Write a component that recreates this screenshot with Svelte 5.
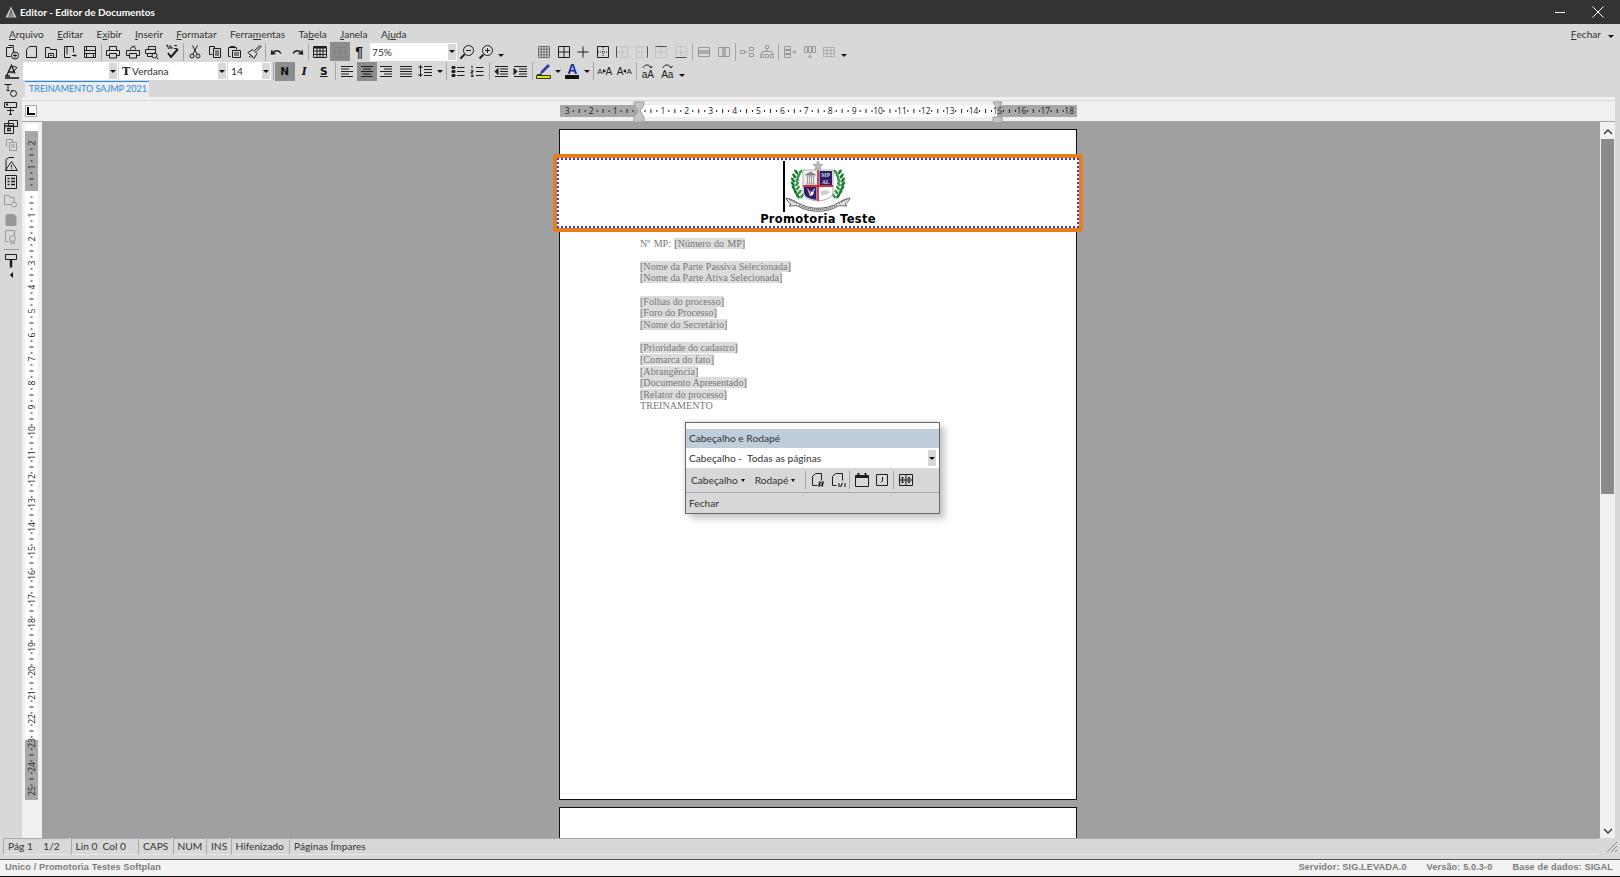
<script>
	const paths = {
		docplus: '<path d="M4.5 1.5h5v2M2.5 3.5h6l1 1v4M2.5 3.5v9h4"/><circle cx="11" cy="11.5" r="3.5"/><path d="M9 11.5h4M11 9.5v4"/>',
		page: '<path d="M6.5 2.5h7v11h-10v-8z"/>',
		open: '<path d="M2.5 13.5v-10h4l1 2h6v8z"/><path d="M5.5 13.5v-4h5v4M7 11.5h2"/>',
		pagego: '<path d="M2.5 2.5h9v6M2.5 2.5v11h6"/><path d="M10 11.5h4M12.5 10l1.5 1.5-1.5 1.5"/><path d="M5 2.5v8"/>',
		save: '<path d="M2.5 2.5h11v11h-11z"/><path d="M2.5 6.5h11M2.5 9.5h11M4.5 2.5v4M11.5 9.5v4M4.5 9.5v4"/>',
		print: '<path d="M4.5 6V2.5h7V6M4.5 11.5h-3v-5h13v5h-3"/><path d="M4.5 9.5h7v4.5h-7z"/>',
		preview: '<path d="M5.5 5.5c0-4 5-4 5 0M1.5 6.5h13v5h-3M4.5 11.5h-3v-5"/><path d="M4.5 9.5h7v4.5h-7z"/><path d="M8 3.5l2-2" />',
		printz: '<path d="M4.5 5V2.5h7V5M1.5 5.5h10v4h-10z"/><circle cx="10.5" cy="11.5" r="2.5"/><path d="M3.5 9.5v3h4.5M12.5 13.5l2 1.5"/>',
		spell: '<path d="M2 2l1.5-1 1 4M6 1v4M6 3h2v2M10 1.5h3M10 4.5h3"/><path d="M4 9l3 4 7-8" stroke-width="2"/>',
		cut: '<circle cx="5" cy="12" r="2"/><circle cx="11" cy="12" r="2"/><path d="M6 10L10.5 1.5M10 10L5.5 1.5"/>',
		copy: '<path d="M5.5 10.5h-3v-8h5v2"/><path d="M6.5 4.5h7v9h-7z"/><path d="M8 7h4M8 9h4M8 11h4"/>',
		paste: '<path d="M4.5 12.5h-2v-9h8v2"/><path d="M4.5 3.5v-1h4v1"/><path d="M6.5 6.5h8v7h-8z"/><path d="M8 9h5M8 11h5"/>',
		brush: '<path d="M2 8.5l5-3 4 4-3 5z"/><path d="M9 6l5-4.5 1 1-4.5 5"/><path d="M4 10l3 3M3 12l1.5 1.5"/>',
		undo: '<path d="M3 6l-.5 4 4-.5M3 9.5c3-4 7-3.5 9 0" stroke-width="1.4"/>',
		redo: '<path d="M13 6l.5 4-4-.5M13 9.5c-3-4-7-3.5-9 0" stroke-width="1.4"/>',
		table: '<path d="M1.5 2.5h13v11h-13z" /><path d="M1.5 3.5h13" stroke-width="2"/><path d="M1.5 7h13M1.5 10.5h13M5 2.5v11M8 2.5v11M11 2.5v11"/>',
		faint: '<path d="M2.5 3.5h11v10h-11zM8 3.5v10M2.5 8.5h11" opacity=".1"/>',
		zoomout: '<circle cx="9.5" cy="6.5" r="5"/><path d="M7 6.5h5M5.5 10.5l-4 4" /><path d="M5.5 10.5l-4 4" stroke-width="2"/>',
		zoomin: '<circle cx="9.5" cy="6.5" r="5"/><path d="M7 6.5h5M9.5 4v5"/><path d="M5.5 10.5l-4 4" stroke-width="2"/>',
		gridall: '<path d="M2.5 2.5h11v11h-11zM8 2.5v11M2.5 8h11M5.2 2.5v11M10.8 2.5v11M2.5 5.2h11M2.5 10.8h11" stroke-dasharray="1 1"/>',
		gridfull: '<path d="M2.5 2.5h11v11h-11zM8 2.5v11M2.5 8h11"/>',
		gridin: '<path d="M8 2.5v11M2.5 8h11"/>',
		gridout: '<path d="M2.5 2.5h11v11h-11z"/><path d="M8 3v10M3 8h10" stroke-dasharray="1 1"/>',
		gridl: '<path d="M2.5 2.5v11" stroke="#333"/><path d="M2.5 2.5h11v11h-11zM8 3v10M3 8h10" stroke-dasharray="1 1" opacity=".6"/>',
		gridr: '<path d="M13.5 2.5v11" stroke="#333"/><path d="M2.5 2.5h11v11h-11zM8 3v10M3 8h10" stroke-dasharray="1 1" opacity=".6"/>',
		gridt: '<path d="M2.5 2.5h11" stroke="#333"/><path d="M2.5 2.5h11v11h-11zM8 3v10M3 8h10" stroke-dasharray="1 1" opacity=".6"/>',
		gridb: '<path d="M2.5 13.5h11" stroke="#333"/><path d="M2.5 2.5h11v11h-11zM8 3v10M3 8h10" stroke-dasharray="1 1" opacity=".6"/>',
		merge: '<path d="M2.5 3.5h11v9h-11z"/><path d="M2.5 7h11M2.5 9h11" stroke-width="2" opacity=".7"/>',
		split: '<path d="M2.5 3.5h11v9h-11z"/><path d="M7 3.5v9M9 3.5v9" stroke-width="2" opacity=".7"/>',
		mvcol: '<path d="M1.5 6.5h4v3h-4zM6 8h3M10.5 3.5h4v3h-4zM10.5 9.5h4v3h-4z"/>',
		tree: '<path d="M6.5 1.5h3v3h-3zM1.5 10.5h3v3h-3zM11.5 10.5h3v3h-3zM8 4.5v3M3 10V7.5h10V10M6.5 10.5h3v3h-3z"/>',
		rowsarrow: '<path d="M2.5 2.5h6v3h-6zM2.5 6.5h6v3h-6zM2.5 10.5h6v3h-6zM10 8h3M12 6.5l2 1.5-2 1.5"/>',
		colsarrow: '<path d="M2.5 2.5h3v6h-3zM6.5 2.5h3v6h-3zM10.5 2.5h3v6h-3zM8 10v3M6.5 12l1.5 2 1.5-2"/>',
		gridsh: '<path d="M2.5 3.5h11v9h-11zM2.5 6.5h11M2.5 9.5h11M6 3.5v9M10 3.5v9" stroke-dasharray="1 .6"/>',
		style: '<path d="M2.5 13L7.5 2.500 11 10.500M1 13h5M5 9h5" stroke-width="1.400"/><path d="M9 3l4 1.500-5 6" /><path d="M1 15h14" stroke-width="1.600"/>',
		left: '<path d="M2 3.5h12M2 6h8M2 8.5h12M2 11h8M2 13.5h12"/>',
		center: '<path d="M2 3.5h12M4 6h8M2 8.5h12M4 11h8M2 13.5h12"/>',
		right: '<path d="M2 3.5h12M6 6h8M2 8.5h12M6 11h8M2 13.5h12"/>',
		justify: '<path d="M2 3.5h12M2 6h12M2 8.5h12M2 11h12M2 13.5h12"/>',
		spacing: '<path d="M7 3.5h8M7 6.5h8M7 9.5h8M7 12.5h8"/><path d="M3.5 3v10M1.5 5l2-2.500 2 2.500M1.500 11l2 2.500 2-2.500"/>',
		bullets: '<path d="M7 4.500h7.500M7 8.500h7.500M7 12.500h7.500"/><path d="M2 3.500h3v2h-3zM2 7.500h3v2h-3zM2 11.500h3v2h-3z" fill="currentColor"/>',
		numbers: '<path d="M7 4.500h7.500M7 8.500h7.500M7 12.500h7.500M3 2.500v3M2 7.500h2v1.500h-2v1h2M2 12h2M2 13.500h2M4 12v2"/>',
		outdent: '<path d="M2 3.500h13M7 6h8M7 8.500h8M7 11h8M2 13.500h13"/><path d="M5 5.500l-3 3 3 3z" fill="currentColor"/>',
		indent: '<path d="M2 3.500h13M7 6h8M7 8.500h8M7 11h8M2 13.500h13"/><path d="M2 5.500l3 3-3 3z" fill="currentColor"/>',
		thand: '<path d="M1.500 2.500h7M5 2.500v6M3.500 8.500h3"/><circle cx="10.500" cy="11.500" r="3"/><path d="M9 8v2"/>',
		screent: '<path d="M1.500 1.500h12v5h-12z"/><path d="M3 3.500h2" stroke-width="2"/><path d="M4 9.500h7M7.500 6.500v7M6 13.500h3"/>',
		cards: '<path d="M5.500 1.500h9v6h-9zM1.500 4.500h9v10h-9z"/><path d="M1.500 7h9M4 9.500h4M4 11.500h4" stroke-width="1.400"/>',
		pages: '<path d="M3.500 9.500v-7h6v3"/><path d="M6.500 5.500h7v8h-7z"/><path d="M8 8h4M8 10h4"/>',
		warn: '<path d="M3 14.500V3.500l3-2h5"/><path d="M8.500 5.500l6 9h-12z"/><path d="M8.500 9v2.500M8.500 12.500v1"/>',
		list: '<path d="M2.500 1.500h11v13h-11z"/><path d="M4.500 4.500h2M8 4.500h4M4.500 7.500h2M8 7.500h4M4.500 10.500h2M8 10.500h4" stroke-width="1.400"/>',
		foldermag: '<path d="M11 9V4.500H7l-1-2H1.500v9H8"/><circle cx="11" cy="11.500" r="2.500"/>',
		solid: '<path d="M4 3.500h7l2 2v9H3v-10z" fill="currentColor"/>',
		cert: '<path d="M2.500 1.500h9v6M2.500 1.500v11h3"/><circle cx="9.500" cy="9.500" r="3"/><path d="M8 12v3l1.500-1 1.500 1v-3"/>',
		paint: '<path d="M2.500 1.500h11v5h-11z"/><path d="M8 6.500v8" stroke-width="2.500"/>',
		hash: '<path d="M5.500 1.500h6v7M5.500 1.500l-3 3v9h5"/><path d="M10 9l-1 6M13 9l-1 6M8.500 11h5.500M8 13h5.500" stroke-width="1.100"/>',
		pnum: '<path d="M5.500 1.500h7v7M5.500 1.500l-3 3v9h4"/><path d="M9 11v4M15 11v4M10.500 15l2-4" stroke-width="1.100"/>',
		cal: '<path d="M1.500 3.500h13v11h-13z"/><path d="M1.500 5h13" stroke-width="2"/><path d="M4.500 1v3M11.500 1v3" stroke-width="2"/>',
		clock: '<path d="M2.500 2.500h11v11h-11z"/><path d="M8.500 5v4l-1.500 1.500"/>',
		fields: '<path d="M1.500 2.500h13v11h-13zM1.500 8h13M8 2.500v11"/><path d="M4.500 5v6M3 6.500l1.500-1.500 1.500 1.500M3 9.500l1.500 1.500 1.500-1.500M11 5v6M9.500 6.500l1.500-1.500 1.500 1.500M9.500 9.500l1.500 1.500 1.500-1.500"/>'
	};

	const menu = [
		['', 'A', 'rquivo'],
		['', 'E', 'ditar'],
		['E', 'x', 'ibir'],
		['', 'I', 'nserir'],
		['', 'F', 'ormatar'],
		['Ferra', 'm', 'entas'],
		['Ta', 'b', 'ela'],
		['', 'J', 'anela'],
		['Aj', 'u', 'da']
	];

	const row1a = ['docplus', 'page', 'open', 'pagego', 'save', '|', 'print', 'preview', 'printz', 'spell', '|', 'cut', 'copy', 'paste', 'brush', '|', 'undo', 'redo', '|', 'table'];
	const row1b = ['gridall', 'gridfull', 'gridin', 'gridout', '~gridl', '~gridr', '~gridt', '~gridb', '|', '~merge', '~split', '|', '~mvcol', '~tree', '|', '~rowsarrow', '~colsarrow', '~gridsh'];
	const leftbar = ['thand', 'screent', 'cards', '~pages', 'warn', 'list', '~foldermag', '~solid', '~cert'];

	const fieldLines = [
		[],
		['[Nome da Parte Passiva Selecionada]'],
		['[Nome da Parte Ativa Selecionada]'],
		[],
		['[Folhas do processo]'],
		['[Foro do Processo]'],
		['[Nome do Secretário]'],
		[],
		['[Prioridade do cadastro]'],
		['[Comarca do fato]'],
		['[Abrangência]'],
		['[Documento Apresentado]'],
		['[Relator do processo]']
	];

	const cm = 23.9;
	const hTicks = [];
	for (let n = -3; n <= 18; n++) hTicks.push(n);
	const vTicks = [];
	for (let n = -2; n <= 25; n++) vTicks.push(n);
	const vSpan = 24;

	// folhas do louro: cada ramo sobe curvando para fora
	const leaves = [];
	for (let k = 0; k < 7; k++) {
		const t = k / 6;
		const bow = 5 * Math.sin(t * Math.PI * 0.9);
		leaves.push({ x: 15 - bow, y: 35 - t * 24 });
	}
</script>

{#snippet icon(name)}
	<svg class="ico" class:off={name.startsWith('~')} viewBox="0 0 16 16" width="16" height="16" fill="none" stroke="currentColor">
		{@html paths[name.replace('~', '')]}
	</svg>
{/snippet}

{#snippet tools(list)}
	{#each list as name}
		{#if name === '|'}
			<span class="sep"></span>
		{:else}
			<span class="btn">{@render icon(name)}</span>
		{/if}
	{/each}
{/snippet}

{#snippet branch()}
	{#each leaves as leaf}
		<ellipse cx={leaf.x - 2.200} cy={leaf.y} rx="1.500" ry="2.900" transform="rotate(-35 {leaf.x - 2.200} {leaf.y})" fill="#1d7a35" />
		<ellipse cx={leaf.x + 2} cy={leaf.y} rx="1.400" ry="2.700" transform="rotate(35 {leaf.x + 2} {leaf.y})" fill="#36964c" />
	{/each}
{/snippet}

<div class="app">
	<header class="titlebar">
		<svg class="appicon" viewBox="0 0 12 12" width="12" height="12">
			<path d="M6 0.500L11.500 11.500H0.500z" fill="#c9c9c9" />
			<path d="M6 3v8.500M3.500 11.500L6 5l2.500 6.500" stroke="#5a5a5a" fill="none" />
		</svg>
		<span class="apptitle">Editor - Editor de Documentos</span>
		<span class="winbtns">
			<svg viewBox="0 0 10 10" width="10" height="10"><path d="M0 5.500h10" stroke="#fff" /></svg>
			<svg viewBox="0 0 12 12" width="12" height="12"><path d="M.5.500l11 11M11.500.500l-11 11" stroke="#fff" /></svg>
		</span>
	</header>

	<nav class="menu">
		{#each menu as [a, u, b]}
			<span>{a}<u>{u}</u>{b}</span>
		{/each}
		<span class="close"><u>F</u>echar<i class="tri"></i></span>
	</nav>

	<div class="bar bar1">
		{@render tools(row1a)}
		<span class="btn pressed">{@render icon('faint')}</span>
		<span class="btn pilcrow">¶</span>
		<span class="combo zoombox">75%<i class="drop"><b class="tri"></b></i></span>
		<span class="btn">{@render icon('zoomout')}</span>
		<span class="btn">{@render icon('zoomin')}</span>
		<span class="more"><i class="tri"></i></span>
		<span class="gap"></span>
		{@render tools(row1b)}
		<span class="more"><i class="tri"></i></span>
	</div>

	<div class="bar bar2">
		<span class="btn">{@render icon('style')}</span>
		<span class="combo stylebox"><i class="drop"><b class="tri"></b></i></span>
		<span class="combo fontbox"><span class="tt">T</span>Verdana<i class="drop"><b class="tri"></b></i></span>
		<span class="combo sizebox">14<i class="drop"><b class="tri"></b></i></span>
		<span class="sep"></span>
		<span class="btn pressed fmt bold">N</span>
		<span class="btn fmt ital">I</span>
		<span class="btn fmt under">S</span>
		<span class="sep"></span>
		<span class="btn">{@render icon('left')}</span>
		<span class="btn pressed">{@render icon('center')}</span>
		<span class="btn">{@render icon('right')}</span>
		<span class="btn">{@render icon('justify')}</span>
		<span class="btn">{@render icon('spacing')}</span>
		<span class="more small"><i class="tri"></i></span>
		<span class="sep"></span>
		<span class="btn">{@render icon('bullets')}</span>
		<span class="btn">{@render icon('numbers')}</span>
		<span class="sep"></span>
		<span class="btn">{@render icon('outdent')}</span>
		<span class="btn">{@render icon('indent')}</span>
		<span class="sep"></span>
		<span class="btn">
			<svg viewBox="0 0 16 16" width="16" height="16">
				<path d="M.5 12.500h14v3H.500z" fill="#e8e000" stroke="#333" />
				<path d="M4 11l1-3 7-7 2 2-7 7z" fill="#2f3f9f" />
				<path d="M1 11.500h5" stroke="#333" />
			</svg>
		</span>
		<span class="more small"><i class="tri"></i></span>
		<span class="btn colora"><span>A</span><i></i></span>
		<span class="more small"><i class="tri"></i></span>
		<span class="sep"></span>
		<span class="btn tiny"><span class="sa">A</span><i class="rt"></i><span>A</span></span>
		<span class="btn tiny"><span>A</span><i class="lt"></i><span class="sa">A</span></span>
		<span class="sep"></span>
		<span class="btn case">
			<svg viewBox="0 0 16 16" width="16" height="16" fill="none" stroke="#222"><path d="M3 5c1-4 7-4 8 0M9.500 3.500L11 5l1.500-2" /></svg>
			<span>aA</span>
		</span>
		<span class="btn case">
			<svg viewBox="0 0 16 16" width="16" height="16" fill="none" stroke="#222"><path d="M3 5c1-4 7-4 8 0M9.500 3.500L11 5l1.500-2" /></svg>
			<span>Aa</span>
		</span>
		<span class="more"><i class="tri"></i></span>
	</div>

	<div class="body">
		<aside class="leftbar">
			{#each leftbar as name}
				<span class="lbtn">{@render icon(name)}</span>
			{/each}
			<span class="hsep"></span>
			<span class="lbtn">{@render icon('paint')}</span>
			<i class="lefttri"></i>
		</aside>

		<div class="content">
			<div class="tabs"><span class="tab">TREINAMENTO SAJMP 2021</span></div>
			<div class="strip"></div>
			<div class="rulerrow">
				<span class="lbox"><svg viewBox="0 0 8 8" width="8" height="8"><path d="M1 0v7h7" fill="none" stroke="#000" stroke-width="2" /></svg></span>
				<svg class="hruler" viewBox="0 0 520 21" width="520" height="21">
					<rect x="1" y="4" width="517" height="12" fill="#fff" />
					<rect x="1" y="4" width="79" height="12" fill="#a8a8a8" />
					<rect x="438" y="4" width="80" height="12" fill="#a8a8a8" />
					{#each hTicks as n}
						{@const x = 80 + n * cm}
						{#if n !== 0}
							<text x={x} y="12.800" text-anchor="middle">{Math.abs(n)}</text>
						{/if}
						{#if n < 18}
							<path d="M{x + cm * 0.25} 9v2M{x + cm * 0.5} 8v4M{x + cm * 0.75} 9v2" stroke="#222" />
						{/if}
					{/each}
					<path d="M75 1h10v3l-4 6 4 6v5H75v-5l4-6-4-6z" fill="#c4c4c4" stroke="#999" />
					<path d="M434 1h9l-4 7-1 0z" fill="#c4c4c4" stroke="#999" />
					<path d="M434 21v-5h9v5" fill="#c4c4c4" stroke="#999" />
				</svg>
			</div>

			<div class="editor">
				<div class="vcol">
					<svg class="vruler" viewBox="0 0 13 676" width="13" height="676">
						<rect width="13" height="676" fill="#fff" />
						<rect y="7" width="13" height="60" fill="#a8a8a8" />
						<rect y="616" width="13" height="60" fill="#a8a8a8" />
						{#each vTicks as n}
							{@const y = 67 + n * vSpan}
							{#if n !== 0}
								<text transform="translate(9.500 {y}) rotate(-90)" text-anchor="middle">{Math.abs(n)}</text>
							{/if}
							{#if n < 25}
								<path d="M5.500 {y + 6}h2M4.500 {y + 12}h4M5.500 {y + 18}h2" stroke="#222" />
							{/if}
						{/each}
					</svg>
				</div>

				<main class="workspace">
					<section class="page">
						<div class="frame">
							<div class="hdr">
								<div class="logorow">
									<span class="caret"></span>
									<svg class="logo" viewBox="0 0 66 51" width="66" height="51">
										<path d="M33 0l1.500 3.500h3.500l-3 2.200 1 3.500-3-2-3 2 1-3.500-3-2.200h3.500z" fill="#bbb" stroke="#777" stroke-width=".5" />
										{@render branch()}
										<g transform="matrix(-1 0 0 1 66 0)">{@render branch()}</g>
										<path d="M18 9h30v22c0 6-7 8-15 9-8-1-15-3-15-9z" fill="#fff" stroke="#aaa" />
										<rect x="19" y="10" width="12.500" height="14" fill="#eee" />
										<path d="M20.500 14l10-.1-5-3zM21.500 15h8M22.500 15.500v7M24.500 15.500v7M26.500 15.500v7M28.500 15.500v7M21 23h9" fill="#888" stroke="#777" stroke-width=".7" />
										<rect x="34.500" y="10" width="12.500" height="14" fill="#2b1f6d" />
										<text class="mp" x="40.700" y="16">MP</text>
										<text class="mp" x="40.700" y="22.500">AL</text>
										<path d="M19 26h12.500v13c-7-1-12.500-3-12.500-8z" fill="#2b1f6d" />
										<path d="M22 27l4 4 4-4-2 7-3 1z" fill="#fff" />
										<path d="M22 27l4 4v3z" fill="#d73b3b" />
										<path d="M26 31l4-4-2 4z" fill="#3b6fd7" />
										<path d="M36 30c3-1 7-1 9 1-2 2-6 4-9 3z" fill="#ccc" />
										<path d="M33 9v31M18 25h30" stroke="#d92f2f" stroke-width="1.800" />
										<path d="M1 37c5 1 9 3 12 5 12 7 28 7 40 0 3-2 7-4 12-5-1 3-3 5-5 6l2 2c-4 0-7-1-9 0-10 7-30 7-40 0-2-1-5 0-9 0l2-2c-2-1-4-3-5-6z" fill="#e4e4e4" stroke="#555" stroke-width=".9" />
										<path d="M14 44c10 6 28 6 38 0" fill="none" stroke="#333" stroke-dasharray="1 1" />
										<path d="M4 38.500l8 4M62 38.500l-8 4" stroke="#333" stroke-dasharray="1 1" />
									</svg>
								</div>
								<div class="orgname">Promotoria Teste</div>
							</div>
						</div>

						<div class="doc">
							<div class="line first">Nº MP: <mark>[Número do MP]</mark></div>
							{#each fieldLines as [text]}
								<div class="line">
									{#if text}<mark>{text}</mark>{:else}&nbsp;{/if}
								</div>
							{/each}
							<div class="line">TREINAMENTO</div>
						</div>
					</section>
					<section class="page next"></section>

					<div class="popup">
						<div class="poptop"></div>
						<div class="poptitle">Cabeçalho e Rodapé</div>
						<div class="popsel">Cabeçalho -&nbsp; Todas as páginas<i class="drop"><b class="tri"></b></i></div>
						<div class="poptools">
							<span class="popmenu">Cabeçalho <i class="tri"></i></span>
							<span class="popmenu">Rodapé <i class="tri"></i></span>
							<span class="sep"></span>
							<span class="btn">{@render icon('hash')}</span>
							<span class="btn">{@render icon('pnum')}</span>
							<span class="sep"></span>
							<span class="btn">{@render icon('cal')}</span>
							<span class="btn">{@render icon('clock')}</span>
							<span class="sep"></span>
							<span class="btn">{@render icon('fields')}</span>
						</div>
						<div class="popclose">Fechar</div>
					</div>
				</main>

				<div class="scrollbar">
					<span class="sbtn"><svg viewBox="0 0 10 6" width="10" height="6"><path d="M1 5l4-4 4 4" fill="none" stroke="#333" stroke-width="1.300" /></svg></span>
					<span class="thumb"></span>
					<span class="track"></span>
					<span class="sbtn"><svg viewBox="0 0 10 6" width="10" height="6"><path d="M1 1l4 4 4-4" fill="none" stroke="#333" stroke-width="1.300" /></svg></span>
				</div>
			</div>
		</div>
	</div>

	<div class="status">
		<span class="cell c1">Pág 1 &nbsp;&nbsp; 1/2</span>
		<span class="cell c2">Lin 0 &nbsp;Col 0</span>
		<span class="cell c3">CAPS</span>
		<span class="cell c4">NUM</span>
		<span class="cell c5">INS</span>
		<span class="cell c6">Hifenizado</span>
		<span class="cell c7">Páginas Ímpares</span>
		<svg class="grip" viewBox="0 0 14 14" width="14" height="14"><path d="M13 3L3 13M13 7l-6 6M13 11l-2 2" stroke="#8a8a8a" fill="none" /></svg>
	</div>

	<footer class="footer">
		<span>Unico / Promotoria Testes Softplan</span>
		<span class="info">
			<span>Servidor: SIG.LEVADA.0</span>
			<span>Versão: 5.0.3-0</span>
			<span>Base de dados: SIGAL</span>
		</span>
	</footer>
</div>

<style>
	:global(body) {
		margin: 0;
		overflow: hidden;
	}

	.app {
		width: 1620px;
		height: 877px;
		display: flex;
		flex-direction: column;
		background: #d8d8d8;
		font-family: 'Lato', sans-serif;
		font-size: 10.200px;
		color: #333;
		overflow: hidden;
	}

	.titlebar {
		height: 24px;
		flex: none;
		display: flex;
		align-items: center;
		background: #333;
		color: #fff;
		padding-left: 5px;
		box-sizing: border-box;
	}

	.apptitle {
		margin-left: 3px;
		font-size: 10px;
		font-weight: 700;
	}

	.winbtns {
		margin-left: auto;
		display: flex;
		align-items: center;
		gap: 27px;
		padding-right: 16px;
	}

	.menu {
		height: 18px;
		flex: none;
		display: flex;
		align-items: center;
		gap: 13.400px;
		padding: 1px 0 0 9px;
		box-sizing: border-box;
		font-size: 10.100px;
	}

	.close {
		margin-left: auto;
		padding-right: 6px;
		display: flex;
		align-items: center;
	}

	.close .tri {
		margin: 6px 0 0 7px;
	}

	.tri {
		display: inline-block;
		width: 0;
		height: 0;
		border-left: 3px solid transparent;
		border-right: 3px solid transparent;
		border-top: 3px solid #111;
	}

	.bar {
		display: flex;
		align-items: center;
		flex: none;
		padding-left: 2px;
	}

	.bar1 {
		height: 19px;
	}

	.bar2 {
		height: 20px;
	}

	.btn {
		width: 19.500px;
		height: 19px;
		flex: none;
		display: flex;
		align-items: center;
		justify-content: center;
		color: #1c1c1c;
	}

	.ico {
		color: #1e1e1e;
		display: block;
	}

	.ico.off {
		color: #989898;
	}

	.pressed {
		background: #8d8d8d;
	}

	.sep {
		width: 1px;
		height: 18px;
		flex: none;
		margin: 0 1.500px;
		background: #a6a6a6;
	}

	.pilcrow {
		font-family: 'Liberation Sans', sans-serif;
		font-size: 14px;
		font-weight: bold;
		color: #111;
	}

	.combo {
		position: relative;
		height: 18px;
		flex: none;
		display: flex;
		align-items: center;
		background: #fff;
		box-sizing: border-box;
		padding-left: 2px;
		color: #333;
	}

	.drop {
		position: absolute;
		right: 0;
		top: 0;
		bottom: 0;
		width: 10px;
		display: flex;
		align-items: center;
		justify-content: center;
		background: #d8d8d8;
		border: 1px solid #fff;
		box-sizing: border-box;
	}

	.zoombox {
		width: 87px;
		margin-left: 1px;
	}

	.more {
		width: 10px;
		flex: none;
		display: flex;
		justify-content: center;
		padding-top: 8px;
	}

	.more.small {
		padding-top: 0;
		width: 9px;
	}

	.gap {
		width: 28.500px;
		flex: none;
	}

	.stylebox {
		width: 95px;
		margin-left: 1px;
	}

	.fontbox {
		width: 108px;
		margin-left: 1.500px;
		padding-left: 1px;
	}

	.tt {
		font-family: 'DejaVu Serif', serif;
		font-weight: bold;
		font-size: 11px;
		width: 12px;
		text-align: center;
		color: #222;
	}

	.sizebox {
		width: 43px;
		margin-left: 1px;
		padding-left: 3px;
	}

	.fmt {
		font-size: 10.500px;
		color: #111;
		font-family: 'DejaVu Sans', sans-serif;
		font-weight: bold;
	}

	.ital {
		font-family: 'DejaVu Serif', serif;
		font-style: italic;
	}

	.under {
		text-decoration: underline;
	}

	.colora {
		position: relative;
		flex-direction: column;
		font-family: 'Liberation Sans', sans-serif;
		font-weight: bold;
		font-size: 14px;
		color: #1c2f9f;
		line-height: 12px;
	}

	.colora i {
		width: 14px;
		height: 4px;
		background: #111;
	}

	.tiny {
		font-family: 'Liberation Sans', sans-serif;
		font-size: 10px;
		color: #222;
	}

	.tiny .sa {
		font-size: 8px;
	}

	.rt {
		border-left: 3px solid #111;
		border-top: 2px solid transparent;
		border-bottom: 2px solid transparent;
	}

	.lt {
		border-right: 3px solid #111;
		border-top: 2px solid transparent;
		border-bottom: 2px solid transparent;
	}

	.case {
		position: relative;
		font-family: 'Liberation Sans', sans-serif;
		font-size: 10px;
		color: #222;
	}

	.case svg {
		position: absolute;
		left: 2px;
		top: 1px;
	}

	.case span {
		margin-top: 6px;
	}

	.body {
		flex: 1;
		min-height: 0;
		display: flex;
	}

	.leftbar {
		width: 22px;
		flex: none;
		display: flex;
		flex-direction: column;
		align-items: center;
	}

	.lbtn {
		height: 18.400px;
		flex: none;
		display: flex;
		align-items: center;
		justify-content: center;
	}

	.hsep {
		width: 15px;
		height: 1px;
		background: #999;
		margin: 2px 0;
		flex: none;
	}

	.lefttri {
		width: 0;
		height: 0;
		margin-top: 2px;
		border-top: 3px solid transparent;
		border-bottom: 3px solid transparent;
		border-right: 3px solid #111;
	}

	.content {
		flex: 1;
		min-width: 0;
		display: flex;
		flex-direction: column;
		padding-right: 5px;
	}

	.tabs {
		height: 16px;
		flex: none;
		padding-left: 3px;
		display: flex;
	}

	.tab {
		width: 124px;
		box-sizing: border-box;
		background: #ececec;
		border-top: 1px solid #1e88e5;
		color: #2a8ae0;
		font-size: 9px;
		line-height: 14px;
		padding-left: 4px;
		white-space: nowrap;
	}

	.strip {
		height: 3px;
		flex: none;
		background: #f0f0f0;
		margin-bottom: 1px;
	}

	.rulerrow {
		height: 20px;
		flex: none;
		display: flex;
		align-items: center;
		background: #f0f0f0;
		border-bottom: 1px solid #a4a4a4;
	}

	.lbox {
		width: 12px;
		height: 12px;
		margin-left: 3px;
		flex: none;
		display: flex;
		align-items: center;
		justify-content: center;
		background: #fff;
		border: 1px solid #aaa;
		box-sizing: border-box;
	}

	.hruler {
		margin-left: 522px;
		flex: none;
		overflow: visible;
	}

	.hruler text,
	.vruler text {
		font-family: 'Open Sans', sans-serif;
		font-size: 8.500px;
		fill: #222;
	}

	.editor {
		flex: 1;
		min-height: 0;
		display: flex;
	}

	.vcol {
		width: 20px;
		flex: none;
		background: #f0f0f0;
		padding: 2px 0 0 3px;
		box-sizing: border-box;
	}

	.vruler {
		display: block;
	}

	.workspace {
		position: relative;
		flex: 1;
		min-width: 0;
		background: #a0a0a0;
		padding: 7px 0 0 517px;
		overflow: hidden;
		box-sizing: border-box;
	}

	.page {
		width: 518px;
		height: 671px;
		box-sizing: border-box;
		background: #fff;
		border: 1px solid #111;
		padding-top: 24px;
	}

	.page.next {
		margin-top: 7px;
	}

	.frame {
		margin: 0 -7px;
		height: 78px;
		box-sizing: border-box;
		border: 4px solid #e67e1c;
		border-radius: 4px;
		background: #fff;
	}

	.hdr {
		height: 70px;
		box-sizing: border-box;
		border: 2px dotted #3636dc;
		padding-top: 1px;
		display: flex;
		flex-direction: column;
		align-items: center;
		color: #000;
	}

	.logorow {
		display: flex;
		height: 51px;
		flex: none;
		margin-right: 3px;
	}

	.caret {
		width: 2px;
		height: 51px;
		background: #000;
	}

	.logo {
		display: block;
	}

	.logo text.mp {
		font-family: 'Liberation Serif', serif;
		font-size: 6px;
		fill: #fff;
		text-anchor: middle;
	}

	.orgname {
		font-family: 'DejaVu Sans', sans-serif;
		font-weight: bold;
		font-size: 11.500px;
		line-height: 14px;
		letter-spacing: 0.300px;
		color: #000;
	}

	.doc {
		margin: 5.500px 0 0 80px;
		font-family: 'Liberation Serif', serif;
		font-size: 10.100px;
		line-height: 11.650px;
		color: #777;
	}

	.line {
		height: 11.650px;
		white-space: nowrap;
	}

	.first {
		word-spacing: 0.700px;
	}

	mark {
		background: #dcdcdc;
		color: #777;
	}

	.popup {
		position: absolute;
		left: 643px;
		top: 300px;
		width: 255px;
		box-sizing: border-box;
		border: 1px solid #666;
		background: #d8d8d8;
		box-shadow: 5px 5px 6px rgba(70, 70, 70, 0.28), -1px -1px 4px rgba(120, 120, 120, 0.2);
		color: #333;
	}

	.poptop {
		height: 6px;
		background: #fff;
	}

	.poptitle {
		height: 19px;
		line-height: 18px;
		background: #c0cedc;
		padding-left: 3px;
	}

	.popsel {
		position: relative;
		height: 20px;
		line-height: 20px;
		background: #fff;
		padding-left: 3px;
	}

	.popsel .drop {
		height: 18px;
		bottom: auto;
		top: 1px;
		right: 2px;
	}

	.poptools {
		height: 25px;
		display: flex;
		align-items: center;
		padding-left: 3px;
		border-bottom: 1px solid #aaa;
		box-sizing: border-box;
	}

	.popmenu {
		margin-left: 2px;
		margin-right: 8px;
		display: flex;
		align-items: center;
		gap: 3px;
	}

	.popmenu .tri {
		border-width: 3px 2.500px 0;
	}

	.poptools .sep {
		margin: 0 2px;
	}

	.popclose {
		height: 20px;
		line-height: 20px;
		padding-left: 3px;
	}

	.scrollbar {
		width: 15px;
		flex: none;
		display: flex;
		flex-direction: column;
		background: #f0f0f0;
		padding-top: 2px;
		box-sizing: border-box;
	}

	.sbtn {
		height: 15px;
		flex: none;
		display: flex;
		align-items: center;
		justify-content: center;
	}

	.thumb {
		height: 355px;
		flex: none;
		margin: 0 1px;
		background: #8b8b8b;
	}

	.track {
		flex: 1;
	}

	.status {
		height: 19px;
		flex: none;
		display: flex;
		align-items: flex-start;
		padding-left: 3px;
		position: relative;
		box-sizing: border-box;
		margin-bottom: 2px;
		gap: 1.500px;
	}

	.cell {
		height: 17px;
		line-height: 14px;
		box-sizing: border-box;
		border-top: 1px solid #a8a8a8;
		border-left: 1px solid #a8a8a8;
		border-bottom: 1px solid #e8e8e8;
		padding-left: 4px;
		white-space: nowrap;
		flex: none;
	}

	.c1 { width: 66px; }
	.c2 { width: 66px; }
	.c3 { width: 33px; }
	.c4 { width: 32px; }
	.c5 { width: 23px; }
	.c6 { width: 57px; }
	.c7 { width: 1310px; }

	.grip {
		position: absolute;
		right: 2px;
		top: 1px;
	}

	.footer {
		height: 18px;
		flex: none;
		display: flex;
		justify-content: space-between;
		align-items: center;
		box-sizing: border-box;
		background: #f3f3f3;
		border-top: 1px solid #555;
		border-bottom: 1px solid #111;
		padding: 0 7px 2px 5px;
		font-family: 'Liberation Sans', sans-serif;
		font-weight: bold;
		font-size: 9.200px;
		color: #7c7c7c;
		letter-spacing: 0.100px;
	}

	.info {
		display: flex;
		gap: 20px;
	}
</style>
